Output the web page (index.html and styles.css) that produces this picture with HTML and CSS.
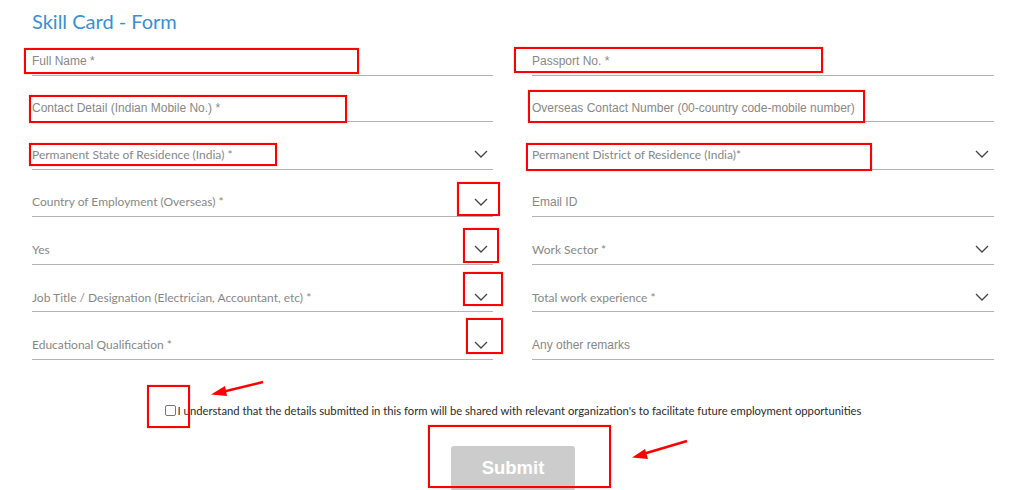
FILE: index.html
```html
<!DOCTYPE html>
<html lang="en">

<head>
    <meta charset="UTF-8">
    <meta name="viewport" content="width=device-width, initial-scale=1.0">
    <title>Skill Card - Form</title>
    <link rel="stylesheet" href="styles.css">
</head>

<body>
    <div class="page">
        <h1 class="title">Skill Card - Form</h1>
        <div class="form-grid">
            <div class="field"><span class="label arial">Full Name *</span></div>
            <div class="field"><span class="label arial">Passport No. *</span></div>

            <div class="field"><span class="label arial">Contact Detail (Indian Mobile No.) *</span></div>
            <div class="field"><span class="label arial">Overseas Contact Number (00-country code-mobile number)</span></div>

            <div class="field"><span class="label">Permanent State of Residence (India) *</span><svg class="chev" viewBox="0 0 14 8"><path d="M1 1 L7 7 L13 1"/></svg></div>
            <div class="field"><span class="label">Permanent District of Residence (India)*</span><svg class="chev" viewBox="0 0 14 8"><path d="M1 1 L7 7 L13 1"/></svg></div>

            <div class="field"><span class="label">Country of Employment (Overseas) *</span><svg class="chev" viewBox="0 0 14 8"><path d="M1 1 L7 7 L13 1"/></svg></div>
            <div class="field"><span class="label arial">Email ID</span></div>

            <div class="field"><span class="label">Yes</span><svg class="chev" viewBox="0 0 14 8"><path d="M1 1 L7 7 L13 1"/></svg></div>
            <div class="field"><span class="label">Work Sector *</span><svg class="chev" viewBox="0 0 14 8"><path d="M1 1 L7 7 L13 1"/></svg></div>

            <div class="field"><span class="label">Job Title / Designation (Electrician, Accountant, etc) *</span><svg class="chev" viewBox="0 0 14 8"><path d="M1 1 L7 7 L13 1"/></svg></div>
            <div class="field"><span class="label">Total work experience *</span><svg class="chev" viewBox="0 0 14 8"><path d="M1 1 L7 7 L13 1"/></svg></div>

            <div class="field"><span class="label">Educational Qualification *</span><svg class="chev" viewBox="0 0 14 8"><path d="M1 1 L7 7 L13 1"/></svg></div>
            <div class="field"><span class="label arial">Any other remarks</span></div>
        </div>

        <div class="agree">
            <span class="check"></span>
            <span class="agree-text">I understand that the details submitted in this form will be shared with relevant organization's to facilitate future employment opportunities</span>
        </div>

        <div class="actions">
            <button class="submit" type="button">Submit</button>
        </div>
    </div>

    <!-- red annotation marks drawn over the screenshot -->
    <div class="marks">
        <div class="mark" style="left:24px;top:48px;width:335px;height:26px"></div>
        <div class="mark" style="left:29px;top:95px;width:318px;height:28px"></div>
        <div class="mark" style="left:514px;top:47px;width:309px;height:26px"></div>
        <div class="mark" style="left:528px;top:90px;width:337px;height:33px"></div>
        <div class="mark" style="left:29px;top:143px;width:248px;height:23px"></div>
        <div class="mark" style="left:526px;top:143px;width:346px;height:28px"></div>
        <div class="mark" style="left:457px;top:182px;width:43px;height:34px"></div>
        <div class="mark" style="left:463px;top:228px;width:36px;height:35px"></div>
        <div class="mark" style="left:463px;top:272px;width:40px;height:34px"></div>
        <div class="mark" style="left:466px;top:318px;width:37px;height:36px"></div>
        <div class="mark" style="left:147px;top:385px;width:43px;height:43px"></div>
        <div class="mark" style="left:428px;top:425px;width:183px;height:63px"></div>
        <svg class="arrows" viewBox="0 0 1024 490">
            <line x1="263" y1="382" x2="222" y2="392" />
            <polygon points="211,394.5 225,386 227,396" />
            <line x1="687" y1="441" x2="643" y2="454" />
            <polygon points="632,457.5 645,449 648,459" />
        </svg>
    </div>
</body>

</html>
```

FILE: styles.css
```css
* {
    margin: 0;
    padding: 0;
    box-sizing: border-box;
}

body {
    background: #fff;
    font-family: Lato, "Liberation Sans", sans-serif;
    overflow: hidden;
}

.page {
    width: 1024px;
    padding: 0 30px 0 32px;
}

.title {
    font-family: Lato, sans-serif;
    font-weight: 400;
    font-size: 20px;
    line-height: 20px;
    padding-top: 11px;
    margin-bottom: -2px;
    color: #3a8fd2;
}

.form-grid {
    display: grid;
    grid-template-columns: 461px 462px;
    grid-template-rows: 47px 46px repeat(5, 47.6px);
    column-gap: 39px;
}

.field {
    display: flex;
    align-items: center;
    justify-content: space-between;
    padding: 21px 5px 3px 0;
    border-bottom: 1px solid #b3b3b3;
}

.label {
    font-family: Lato, sans-serif;
    font-size: 12px;
    color: #888;
}

.label.arial {
    font-family: "Liberation Sans", Arial, sans-serif;
}

.chev {
    width: 14px;
    height: 8px;
}

.chev path {
    fill: none;
    stroke: #444;
    stroke-width: 1.3;
}

.agree {
    display: flex;
    align-items: center;
    justify-content: center;
    gap: 2px;
    margin-top: 44px;
}

.check {
    width: 11px;
    height: 11px;
    border: 1px solid #777;
    border-radius: 2px;
}

.agree-text {
    font-size: 11.25px;
    color: #2b2b2b;
}

.actions {
    display: flex;
    justify-content: center;
    margin-top: 29px;
}

.submit {
    width: 124px;
    height: 45px;
    border: none;
    border-radius: 3px;
    background: #cccccc;
    color: #fff;
    font-family: "Liberation Sans", Arial, sans-serif;
    font-weight: 700;
    font-size: 18.5px;
}

.marks {
    position: absolute;
    left: 0;
    top: 0;
    width: 1024px;
    height: 490px;
    pointer-events: none;
}

.mark {
    position: absolute;
    border: 2px solid #f00;
    box-shadow: 0 0 1px rgba(255, 0, 0, 0.5);
}

.arrows {
    position: absolute;
    left: 0;
    top: 0;
    width: 1024px;
    height: 490px;
}

.arrows line {
    stroke: #f00;
    stroke-width: 2.5;
}

.arrows polygon {
    fill: #f00;
}
```
